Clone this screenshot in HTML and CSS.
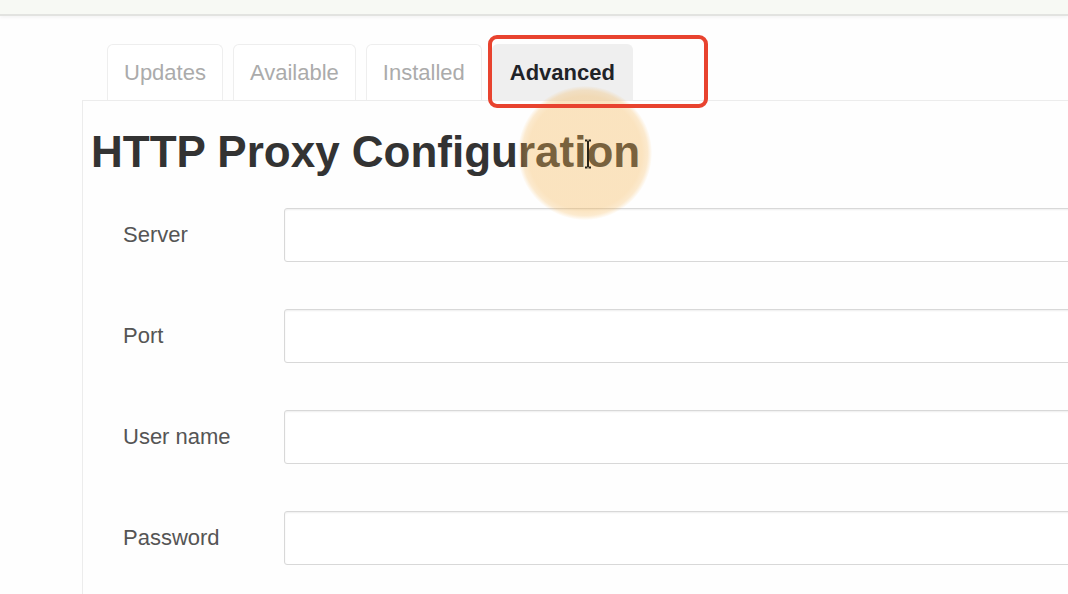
FILE: index.html
```html
<!DOCTYPE html>
<html lang="en">
<head>
<meta charset="utf-8">
<title>Software - Advanced</title>
<link rel="stylesheet" href="styles.css">
</head>
<body>
<header class="topbar"></header>
<main class="main">
  <nav class="tabs">
    <a class="tab">Updates</a>
    <a class="tab">Available</a>
    <a class="tab">Installed</a>
    <a class="tab tab-active">Advanced</a>
  </nav>
  <section class="panel">
    <h1 class="title">HTTP Proxy Configuration</h1>
    <div class="form">
      <div class="row"><label class="label">Server</label><input class="field" type="text"></div>
      <div class="row"><label class="label">Port</label><input class="field" type="text"></div>
      <div class="row"><label class="label">User name</label><input class="field" type="text"></div>
      <div class="row"><label class="label">Password</label><input class="field" type="password"></div>
    </div>
  </section>
  <div class="halo"></div>
  <div class="annot-box"></div>
  <svg class="ibeam" width="12" height="30" viewBox="0 0 12 30">
    <path d="M3 1.5 H5.5 M6.5 1.5 H9 M6 2 V28 M3 28.5 H5.5 M6.5 28.5 H9" stroke="#2a2418" stroke-width="2" fill="none"/>
  </svg>
</main>
</body>
</html>
```

FILE: styles.css
```css
* { box-sizing: border-box; }
html, body { margin: 0; padding: 0; }
body {
  width: 1068px;
  height: 594px;
  overflow: hidden;
  background: #fefefe;
  font-family: "Liberation Sans", Arial, sans-serif;
  color: #333;
}
.topbar {
  height: 16px;
  background: #f7f9f4;
  border-bottom: 2px solid #e2e3e0;
  box-shadow: 0 2px 3px rgba(0,0,0,0.04);
}
.main {
  position: relative;
  padding: 28px 0 0 82px;
}
.tabs {
  display: flex;
  gap: 10px;
  margin-left: 25px;
  height: 56px;
  align-items: flex-end;
}
.tab {
  display: block;
  height: 56px;
  line-height: 55px;
  padding: 0 16px;
  font-size: 22px;
  color: #ababab;
  border: 1px solid #eeeeee;
  border-bottom: none;
  border-radius: 6px 6px 0 0;
  background: #fff;
}
.tab-active {
  color: #1f2328;
  font-weight: bold;
  background: #efefef;
  border-color: #efefef;
  padding: 0 17px;
}
.panel {
  border-top: 1px solid #ececec;
  border-left: 1px solid #ececec;
  min-height: 500px;
}
.title {
  margin: 24px 0 0 8px;
  font-size: 44px;
  line-height: 53px;
  font-weight: bold;
  color: #333;
}
.form {
  margin-top: 30px;
  padding-left: 40px;
  display: flex;
  flex-direction: column;
  gap: 47px;
}
.row {
  display: flex;
  align-items: center;
  height: 54px;
}
.label {
  width: 161px;
  flex: none;
  font-size: 22px;
  color: #555;
}
.field {
  flex: none;
  width: 900px;
  height: 54px;
  border: 1px solid #d8d8d8;
  border-radius: 3px;
  background: #fff;
  box-shadow: inset 0 1px 2px rgba(0,0,0,0.07);
}
.halo {
  position: absolute;
  left: 518px;
  top: 70px;
  width: 134px;
  height: 134px;
  border-radius: 50%;
  background: radial-gradient(circle, rgba(245,180,80,0.36) 0, rgba(245,180,80,0.36) 60%, rgba(245,180,80,0.28) 66%, rgba(245,180,80,0) 71%);
  pointer-events: none;
}
.annot-box {
  position: absolute;
  left: 488px;
  top: 19px;
  width: 220px;
  height: 73px;
  border: 4px solid #e8432f;
  border-radius: 9px;
  pointer-events: none;
}
.ibeam {
  position: absolute;
  left: 582px;
  top: 123px;
}
```
